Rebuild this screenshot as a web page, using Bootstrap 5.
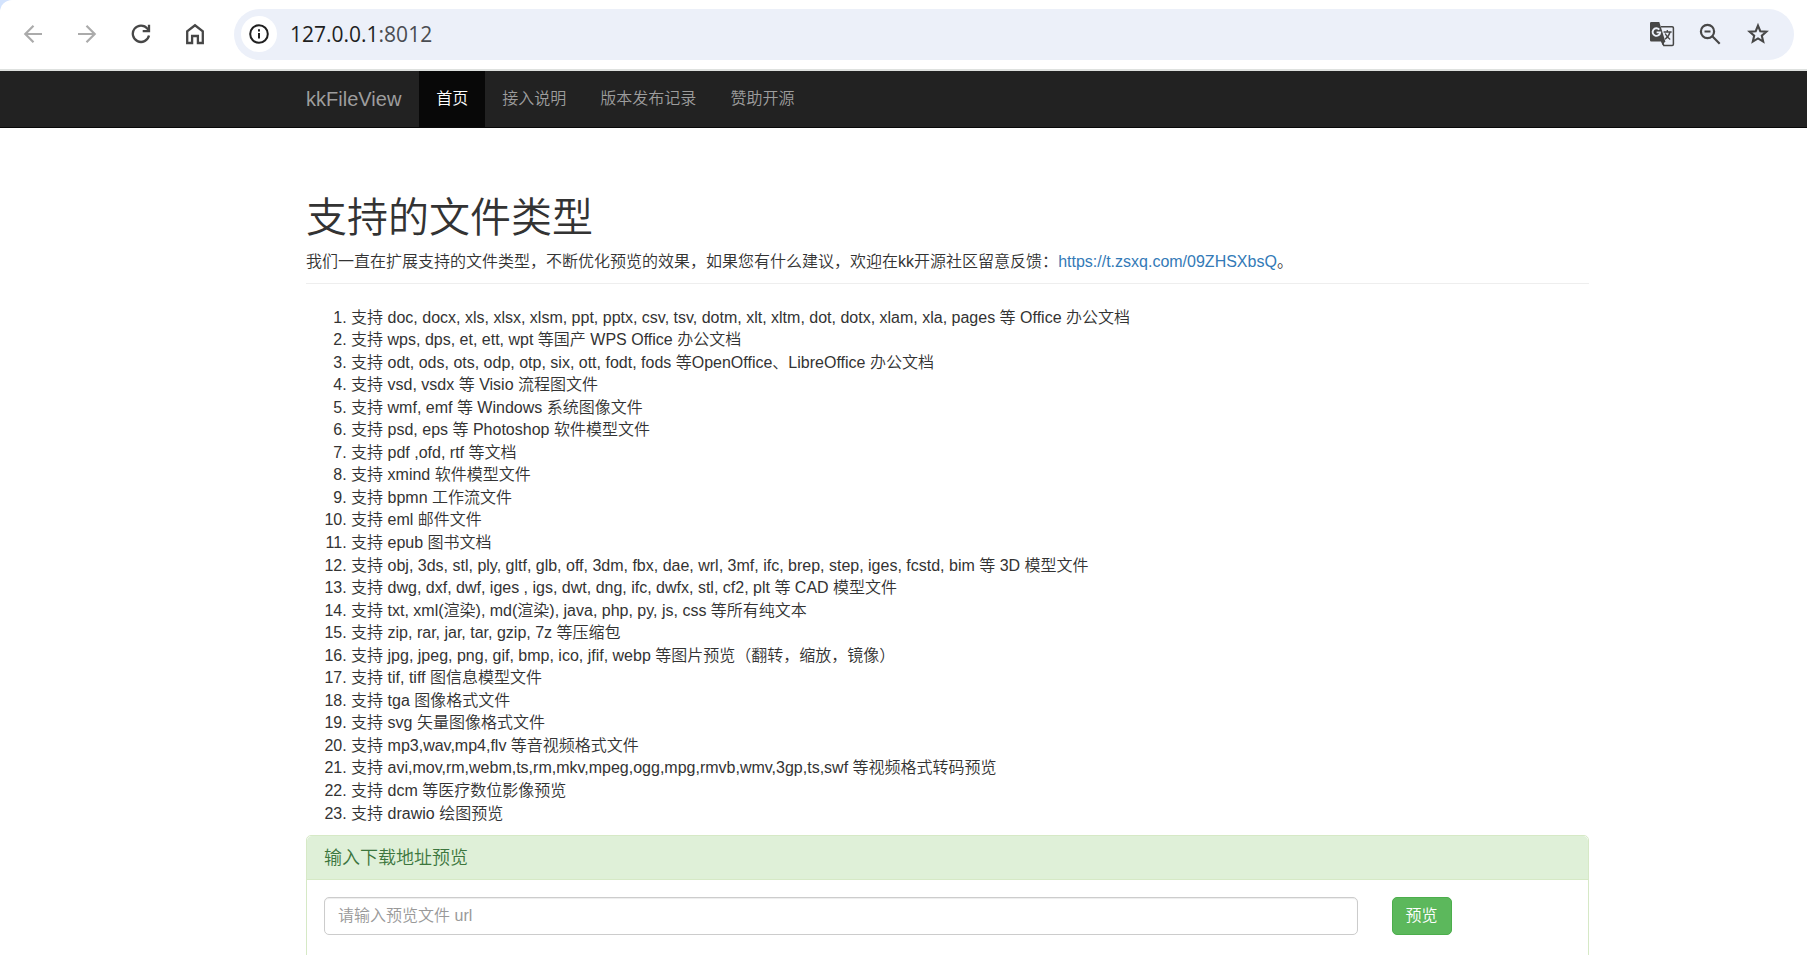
<!DOCTYPE html>
<html lang="zh-CN">
<head>
<meta charset="utf-8">
<meta name="viewport" content="width=device-width, initial-scale=1">
<title>kkFileView</title>
<link rel="stylesheet" href="https://cdn.jsdelivr.net/npm/bootstrap@5.3.0/dist/css/bootstrap.min.css">
<style>
  body { font-family: "Liberation Sans", "Noto Sans CJK SC", sans-serif; font-size: 16px; font-weight: 350; line-height: 1.41; color: #333; background: #fff; }

  /* browser toolbar */
  .chrome-strip { background: #d3e3fd; }
  .chrome-bar { height: 71px; padding: 0 13px 1px 6px; background: #fff; border-bottom: 2px solid #dee1df; border-top-left-radius: 12px; }
  .tool-btn { width: 54px; height: 50px; padding: 0; border: 0; background: none; color: #474747; display: flex; align-items: center; justify-content: center; }
  .tool-btn:disabled { color: #ababab; }
  .omnibox { height: 51px; margin-left: 12px; padding: 0 12px 0 7px; border-radius: 26px; background: #ecf0f9; }
  .site-info { width: 36px; height: 36px; padding: 0; border: 0; border-radius: 50%; background: #fff; color: #1f1f1f; display: flex; align-items: center; justify-content: center; }
  .address { margin-left: 13px; font: 400 21px/28px "Open Sans", sans-serif; color: #1f1f1f; }
  .address span { color: #4a4d52; }
  .omnibox .tool-btn { width: 48px; }

  /* page */
  .page-wrap { max-width: 1317px; margin-left: 16%; padding: 0 17px; }
  .top-nav { background: #222; border-bottom: 1px solid #080808; padding: 0; }
  .top-nav .navbar-brand { margin: 0; padding: 0 18px 0 0; font-size: 20px; line-height: 56px; color: #9d9d9d; }
  .top-nav .navbar-nav .nav-link { padding: 0 17px; line-height: 56px; color: #9d9d9d; }
  .top-nav .navbar-nav .nav-link.active { background: #080808; color: #fff; }
  .page-title { margin: 0 0 11px; font-size: 41px; line-height: 44px; font-weight: 350; }
  .page-head { padding: 68px 0 9px; border-bottom: 1px solid #eee; margin-bottom: 23px; }
  .page-head p { margin: 0; }
  .page-head a { color: #337ab7; text-decoration: none; }
  .type-list { margin: 0 0 10px; padding-left: 45px; }
  .panel { border: 1px solid #d6e9c6; border-radius: 5px; }
  .panel .card-header { padding: 11px 17px 10px; background: #dff0d8; border-bottom: 1px solid #d6e9c6; }
  .panel h2 { margin: 0; font-size: 18px; line-height: 22px; font-weight: 350; color: #3c763d; }
  .panel h2 label { display: block; }
  .panel .card-body { padding: 17px 17px 50px; }
  .panel .row { --bs-gutter-x: 34px; }
  .panel .form-control { height: 38px; padding: 6px 13px; border: 1px solid #ccc; border-radius: 5px; font-size: 16px; font-weight: 350; color: #555; box-shadow: inset 0 1px 1px rgba(0,0,0,.075); }
  .panel .form-control::placeholder { color: #999; opacity: 1; }
  .btn-preview { height: 38px; padding: 0 13px; border: 1px solid #4cae4c; border-radius: 5px; background: #5cb85c; color: #fff; font-size: 16px; font-weight: 350; line-height: 22px; }
</style>
</head>
<body class="vh-100 overflow-hidden">

<header class="chrome-strip">
  <div class="chrome-bar d-flex align-items-center">
    <button class="tool-btn" type="button" disabled aria-label="后退">
      <svg width="20" height="20" viewBox="0 0 20 20" fill="none" stroke="currentColor" stroke-width="2.2"><path d="M19 10H3M10.5 1.8 2.3 10l8.2 8.2"/></svg>
    </button>
    <button class="tool-btn" type="button" disabled aria-label="前进">
      <svg width="20" height="20" viewBox="0 0 20 20" fill="none" stroke="currentColor" stroke-width="2.2"><path d="M1 10h16M9.5 1.8l8.2 8.2-8.2 8.2"/></svg>
    </button>
    <button class="tool-btn" type="button" aria-label="重新加载">
      <svg width="20" height="20" viewBox="0 0 20 20" fill="none" stroke="currentColor" stroke-width="2.3"><path d="M18 11.6A8.2 8.2 0 1 1 16.4 4.6L17.6 6.4"/><path d="M18 .8v6.3h-6.3"/></svg>
    </button>
    <button class="tool-btn" type="button" aria-label="主页">
      <svg width="20" height="22" viewBox="0 0 20 22" fill="none" stroke="currentColor" stroke-width="2.3"><path d="M2.2 20V8.3L10 2.3l7.8 6V20h-4.9v-7H7.1v7z"/></svg>
    </button>
    <div class="omnibox d-flex align-items-center flex-grow-1">
      <button class="site-info" type="button" aria-label="网站信息">
        <svg width="20" height="20" viewBox="0 0 20 20" fill="none" stroke="currentColor" stroke-width="2"><circle cx="10" cy="10" r="8.8"/><path d="M10 9v5.6M10 5.2v2.2"/></svg>
      </button>
      <div class="address">127.0.0.1<span>:8012</span></div>
      <button class="tool-btn ms-auto" type="button" aria-label="翻译此页">
        <svg width="26" height="26" viewBox="0 0 26 26" fill="none" stroke="currentColor">
          <path d="M12 5.8h11.2a1.2 1.2 0 0 1 1.2 1.2v16.2a1.2 1.2 0 0 1-1.2 1.2h-8.4l-2-4.4" stroke-width="1.5"/>
          <path d="M2.3 1h8l6 19.5H2.3A1.3 1.3 0 0 1 1 19.2V2.3A1.3 1.3 0 0 1 2.3 1z" fill="currentColor" stroke="none"/>
          <path d="M12 20h4.5l-3 4.2z" fill="currentColor" stroke="none"/>
          <path d="M10.3 8.6A3.8 3.8 0 1 0 11.200 11.400H7.600" stroke="#ecf0f9" stroke-width="1.900"/>
          <path d="M14.600 11h8M18.300 9v2M21 11c-.6 3-2.600 5.500-5 7.200M16.200 12.500c1 2.500 2.800 4.500 5 6" stroke-width="1.300"/>
        </svg>
      </button>
      <button class="tool-btn" type="button" aria-label="缩放">
        <svg width="22" height="22" viewBox="0 0 22 22" fill="none" stroke="currentColor" stroke-width="2.2"><circle cx="8.5" cy="8.5" r="6.6"/><path d="m13.3 13.3 7.4 7.4M5.500 8.500h6"/></svg>
      </button>
      <button class="tool-btn" type="button" aria-label="为此标签页添加书签">
        <svg width="24" height="24" viewBox="0 0 24 24" fill="none" stroke="currentColor" stroke-width="2.1"><path d="m12 3.600 2.300 5.600 6.100.5-4.600 4 1.400 5.900-5.200-3.200-5.200 3.200 1.400-5.900-4.600-4 6.100-.5z"/></svg>
      </button>
    </div>
  </div>
</header>

<nav class="navbar navbar-expand top-nav">
  <div class="page-wrap d-flex w-100">
    <a class="navbar-brand" href="#">kkFileView</a>
    <ul class="navbar-nav">
      <li class="nav-item"><a class="nav-link active" aria-current="page" href="#">首页</a></li>
      <li class="nav-item"><a class="nav-link" href="#">接入说明</a></li>
      <li class="nav-item"><a class="nav-link" href="#">版本发布记录</a></li>
      <li class="nav-item"><a class="nav-link" href="#">赞助开源</a></li>
    </ul>
  </div>
</nav>

<main class="page-wrap">
  <div class="page-head">
    <h1 class="page-title">支持的文件类型</h1>
    <p>我们一直在扩展支持的文件类型，不断优化预览的效果，如果您有什么建议，欢迎在kk开源社区留意反馈：<a href="https://t.zsxq.com/09ZHSXbsQ">https://t.zsxq.com/09ZHSXbsQ</a>。</p>
  </div>

  <ol class="type-list">
    <li>支持 doc, docx, xls, xlsx, xlsm, ppt, pptx, csv, tsv, dotm, xlt, xltm, dot, dotx, xlam, xla, pages 等 Office 办公文档</li>
    <li>支持 wps, dps, et, ett, wpt 等国产 WPS Office 办公文档</li>
    <li>支持 odt, ods, ots, odp, otp, six, ott, fodt, fods 等OpenOffice、LibreOffice 办公文档</li>
    <li>支持 vsd, vsdx 等 Visio 流程图文件</li>
    <li>支持 wmf, emf 等 Windows 系统图像文件</li>
    <li>支持 psd, eps 等 Photoshop 软件模型文件</li>
    <li>支持 pdf ,ofd, rtf 等文档</li>
    <li>支持 xmind 软件模型文件</li>
    <li>支持 bpmn 工作流文件</li>
    <li>支持 eml 邮件文件</li>
    <li>支持 epub 图书文档</li>
    <li>支持 obj, 3ds, stl, ply, gltf, glb, off, 3dm, fbx, dae, wrl, 3mf, ifc, brep, step, iges, fcstd, bim 等 3D 模型文件</li>
    <li>支持 dwg, dxf, dwf, iges , igs, dwt, dng, ifc, dwfx, stl, cf2, plt 等 CAD 模型文件</li>
    <li>支持 txt, xml(渲染), md(渲染), java, php, py, js, css 等所有纯文本</li>
    <li>支持 zip, rar, jar, tar, gzip, 7z 等压缩包</li>
    <li>支持 jpg, jpeg, png, gif, bmp, ico, jfif, webp 等图片预览（翻转，缩放，镜像）</li>
    <li>支持 tif, tiff 图信息模型文件</li>
    <li>支持 tga 图像格式文件</li>
    <li>支持 svg 矢量图像格式文件</li>
    <li>支持 mp3,wav,mp4,flv 等音视频格式文件</li>
    <li>支持 avi,mov,rm,webm,ts,rm,mkv,mpeg,ogg,mpg,rmvb,wmv,3gp,ts,swf 等视频格式转码预览</li>
    <li>支持 dcm 等医疗数位影像预览</li>
    <li>支持 drawio 绘图预览</li>
  </ol>

  <section class="card panel">
    <div class="card-header"><h2><label for="url">输入下载地址预览</label></h2></div>
    <div class="card-body">
      <form class="row">
        <div class="col-10">
          <input class="form-control" id="url" type="text" placeholder="请输入预览文件 url">
        </div>
        <div class="col-2">
          <button class="btn btn-preview" type="button">预览</button>
        </div>
      </form>
    </div>
  </section>
</main>

<script src="https://cdn.jsdelivr.net/npm/bootstrap@5.3.0/dist/js/bootstrap.bundle.min.js"></script>
</body>
</html>
